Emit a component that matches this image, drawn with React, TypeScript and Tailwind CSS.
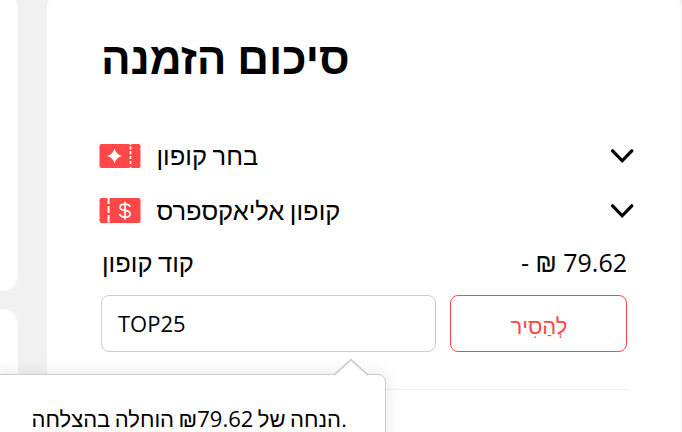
import React from 'react'

const Chevron = () => (
  <svg className="h-4 w-6" viewBox="0 0 24 16" fill="none">
    <path d="M2.6 2.8 12.2 12.8 21.8 2.8" stroke="#000" strokeWidth="3.2" strokeLinecap="round" />
  </svg>
)

const SparkTicket = () => (
  <svg className="h-6 w-[42px]" viewBox="0 0 42 24">
    <path
      d="M2.5 0H30.2Q31.5 1.8 32.8 0H39.5Q41.5 0 41.5 2V4.2Q40.4 5 41.5 5.9V18.1Q40.4 19 41.5 19.8V22Q41.5 24 39.5 24H32.8Q31.5 22.2 30.2 24H2.5Q.5 24 .5 22V2Q.5 0 2.5 0Z"
      fill="#ff4747"
    />
    <path d="M15.5 4.5Q17 10.5 23 12Q17 13.5 15.5 19.5Q14 13.5 8 12Q14 10.5 15.5 4.5Z" fill="#fff" />
    <path d="M31.5 2.5V22" stroke="#fff" strokeWidth="1.8" strokeDasharray="3 1.8" />
  </svg>
)

const DollarTicket = () => (
  <svg className="h-[25px] w-[42px]" viewBox="0 0 42 25">
    <path
      d="M2.5 0H8.5Q9.6 1.6 10.7 0H39.5Q41.5 0 41.5 2V23Q41.5 25 39.5 25H10.7Q9.6 23.4 8.5 25H2.5Q.5 25 .5 23V20.5Q1.7 19.6 .5 18.7V6.3Q1.7 5.4 .5 4.5V2Q.5 0 2.5 0Z"
      fill="#ff4747"
    />
    <path d="M9.6 0V25" stroke="#fff" strokeWidth="2" strokeDasharray="7 2" strokeDashoffset="1" />
    <path
      d="M31.1 8.7C30.4 7 28.5 6.1 26 6.1C22.9 6.1 21 7.3 21 9.2C21 11.3 23 12 26 12.4C29.1 12.8 31.3 13.6 31.3 15.8C31.3 17.9 29.2 19.2 26 19.2C23.1 19.2 21.1 18.1 20.5 16.1M26 3.5V21.5"
      fill="none"
      stroke="#fff"
      strokeWidth="1.7"
    />
  </svg>
)

const CouponRow = ({ icon, label }: { icon: React.ReactNode; label: string }) => (
  <div className="flex h-[55px] items-center">
    <div className="-ml-[3px] w-[57.5px]">{icon}</div>
    <span className="flex-1 text-[25.5px] leading-9 [word-spacing:-1.5px]">{label}</span>
    <div className="-mr-[7px]">
      <Chevron />
    </div>
  </div>
)

export default function App() {
  return (
    <div className="relative flex h-[432px] w-[682px] overflow-hidden bg-[#f1f1f1] font-['Liberation_Sans',sans-serif] text-black">
      <div className="mr-[29px] flex w-[18px] flex-col gap-[18px]">
        <div className="-mt-2 h-[299px] rounded-r-2xl bg-white" />
        <div className="flex-1 rounded-tr-2xl bg-white" />
      </div>

      <main className="-mt-2 flex w-[634px] flex-col rounded-t-2xl bg-white pt-2 pr-[54px] pl-[55px]">
        <h1 className="mt-[29px] -ml-px h-[99px] text-[44px] leading-[60px] font-bold [word-spacing:-1.5px]">סיכום הזמנה</h1>
        <CouponRow icon={<SparkTicket />} label="בחר קופון" />
        <CouponRow icon={<DollarTicket />} label="קופון אליאקספרס" />

        <div className="flex h-[57px] items-center justify-between pb-2 text-[25px] leading-9">
          <span className="text-[25.5px] [word-spacing:-1.5px]">קוד קופון</span>
          <span className="font-['Open_Sans']">
            - <span className="font-['Liberation_Sans']">₪</span> 79.62
          </span>
        </div>

        <div className="-ml-px flex h-[57px] gap-[14px]">
          <div className="flex w-[335px] items-center rounded-lg border border-[#ccc] px-4 font-['Open_Sans'] text-[22px]">
            TOP25
          </div>
          <button className="flex-1 rounded-lg border border-[#ff4747] pt-[5px] pl-px text-[22px] text-[#ff4747]">לְהַסִיר</button>
        </div>
        <div className="mt-[37px] mr-[-1px] border-t border-[#efefef]" />
      </main>

      <div className="absolute top-[374px] -left-4 h-20 w-[402px] rounded-lg border border-[#ccc] bg-white shadow-[0_0_18px_rgba(0,0,0,0.1)]">
        <svg className="absolute -top-4 left-[349px] h-[17px] w-[34px]" viewBox="0 0 34 17">
          <path d="M0 17 17 0 34 17Z" fill="#fff" />
          <path d="M0 16.2 17 .7 34 16.2" fill="none" stroke="#ccc" strokeWidth="1.8" />
        </svg>
        <p className="pt-[31px] pl-[46.5px] text-[22px] leading-6 [word-spacing:-1.6px] whitespace-nowrap">
          הנחה של ₪<span className="font-['Open_Sans']">79.62</span> הוחלה בהצלחה.
        </p>
      </div>
    </div>
  )
}
